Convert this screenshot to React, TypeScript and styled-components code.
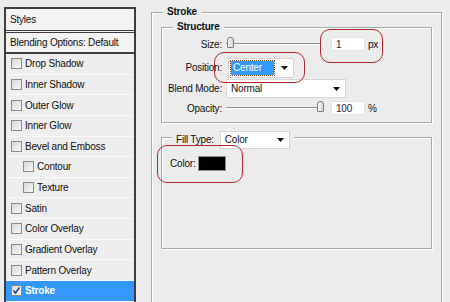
import React from "react";
import styled, { createGlobalStyle } from "styled-components";

const GlobalStyle = createGlobalStyle`
  html, body {
    margin: 0;
    padding: 0;
    background: #ececec;
  }
  body {
    font-family: "Liberation Sans", Arial, sans-serif;
    font-size: 10px;
    letter-spacing: -0.2px;
    color: #111;
  }
`;

const Page = styled.div`
  display: flex;
  align-items: flex-start;
  width: 450px;
  height: 302px;
  padding: 7px 0 0 4px;
  box-sizing: border-box;
  overflow: hidden;
  background: #ececec;
`;

/* ---------- left: styles list ---------- */

const StylesPanel = styled.div`
  flex-shrink: 0;
  width: 132px;
  height: 320px;
  box-sizing: border-box;
  border: 2px solid #3d3d3d;
  border-bottom: 0;
  background: #eeeeee;
`;

const PanelHeader = styled.div<{ $double?: boolean }>`
  display: flex;
  align-items: center;
  height: ${(p) => (p.$double ? 21 : 19)}px;
  padding-left: 4px;
  background: #f3f3f3;
  border-bottom: ${(p) => (p.$double ? "3px double #3d3d3d" : "2px solid #3d3d3d")};
`;

const StyleRow = styled.div<{ $indent?: boolean; $selected?: boolean }>`
  display: flex;
  align-items: center;
  gap: 3px;
  height: 19.64px;
  padding-left: ${(p) => (p.$indent ? 17 : 5)}px;
  border-bottom: 1px solid #f9f9f9;
  background: ${(p) => (p.$selected ? "#3399ff" : "transparent")};
  color: ${(p) => (p.$selected ? "#fff" : "#111")};
  font-weight: ${(p) => (p.$selected ? 700 : 400)};
`;

const Check = styled.span`
  display: inline-flex;
  align-items: center;
  justify-content: center;
  width: 11px;
  height: 11px;
  box-sizing: border-box;
  border: 1px solid #8a8a8a;
  background: linear-gradient(135deg, #d8d8d8, #f8f8f8);
`;

const CheckMark = () => (
  <svg width="9" height="9" viewBox="0 0 9 9">
    <path d="M1.5 4.5 L3.5 7 L7.5 1.5" fill="none" stroke="#22398a" strokeWidth="1.4" />
  </svg>
);

/* ---------- right: stroke settings ---------- */

const Group = styled.div<{ $height?: number }>`
  position: relative;
  box-sizing: border-box;
  border: 1px solid #a8a8a8;
  box-shadow: inset 1px 1px 0 #fff, 1px 1px 0 #fff;
  ${(p) => (p.$height ? `height: ${p.$height}px;` : "")}
`;

const OuterGroup = styled(Group)`
  width: 291px;
  margin: 5px 0 0 15px;
  padding: 0 9px;
  display: flex;
  flex-direction: column;
  align-items: stretch;
`;

const Legend = styled.div<{ $left: number }>`
  display: flex;
  align-items: center;
  align-self: flex-start;
  gap: 6px;
  width: fit-content;
  margin: -7px 0 0 ${(p) => p.$left}px;
  padding: 0 4px;
  line-height: 12px;
  background: #ececec;
  font-weight: 700;
`;

const InnerGroup = styled(Group)<{ $gap: number }>`
  margin-top: ${(p) => p.$gap}px;
  display: flex;
  flex-direction: column;
  align-items: flex-start;
`;

const FieldRows = styled.div`
  display: grid;
  grid-template-columns: 60px 1fr;
  column-gap: 4px;
  width: 100%;
  margin-top: 4px;
  padding-bottom: 7px;
`;

const Label = styled.div<{ $h: number; $mt?: number }>`
  display: flex;
  align-items: center;
  justify-content: flex-end;
  height: ${(p) => p.$h}px;
  margin-top: ${(p) => p.$mt ?? 0}px;
`;

const Control = styled.div<{ $h: number; $mt?: number }>`
  display: flex;
  align-items: center;
  height: ${(p) => p.$h}px;
  margin-top: ${(p) => p.$mt ?? 0}px;
`;

const Slider = styled.div`
  position: relative;
  width: 94px;
  height: 2px;
  border-top: 1px solid #8c8c8c;
  border-bottom: 1px solid #fff;
  box-sizing: border-box;
`;

const Thumb = styled.span`
  position: absolute;
  top: -7px;
  width: 7px;
  height: 11px;
  box-sizing: border-box;
  border: 1px solid #7d7d7d;
  border-radius: 3px 3px 1px 1px;
  background: linear-gradient(90deg, #fdfdfd, #d6d6d6);
`;

const NumberBox = styled.div`
  display: flex;
  align-items: center;
  width: 34px;
  height: 14px;
  margin-left: 11px;
  padding-left: 4px;
  box-sizing: border-box;
  background: #fff;
  border: 1px solid #e2e2e2;
  color: #1a1a40;
`;

const Unit = styled.span`
  margin-left: 3px;
`;

const Select = styled.div<{ $w: number; $h: number; $ml?: number }>`
  display: flex;
  align-items: center;
  justify-content: space-between;
  width: ${(p) => p.$w}px;
  height: ${(p) => p.$h}px;
  margin-left: ${(p) => p.$ml ?? 0}px;
  padding: 0 5px 0 2px;
  box-sizing: border-box;
  background: #fff;
  border: 1px solid #d6d6d6;
  font-weight: 400;
`;

const SelectText = styled.span<{ $active?: boolean }>`
  display: flex;
  align-items: center;
  height: 14px;
  padding: 0 ${(p) => (p.$active ? 12 : 2)}px 0 2px;
  background: ${(p) => (p.$active ? "#3399ff" : "transparent")};
  color: ${(p) => (p.$active ? "#fff" : "#111")};
  outline: ${(p) => (p.$active ? "1px dotted #7a4a10" : "none")};
`;

const Arrow = () => (
  <svg width="7" height="4" viewBox="0 0 7 4">
    <path d="M0 0 H7 L3.5 4 Z" fill="#111" />
  </svg>
);

const PlainLabel = styled.span`
  font-weight: 400;
`;

const ColorRow = styled.div`
  display: flex;
  align-items: center;
  gap: 3px;
  margin: 7px 0 0 8px;
  padding-bottom: 77px;
`;

const Swatch = styled.span<{ $color: string }>`
  width: 28px;
  height: 15px;
  box-sizing: border-box;
  border: 1px solid #8a8a8a;
  background: ${(p) => p.$color};
`;

const Ring = styled.div<{ $x: number; $y: number; $w: number; $h: number }>`
  position: absolute;
  left: ${(p) => p.$x}px;
  top: ${(p) => p.$y}px;
  width: ${(p) => p.$w}px;
  height: ${(p) => p.$h}px;
  box-sizing: border-box;
  border: 1.5px solid #b3272e;
  border-radius: 10px;
  pointer-events: none;
`;

const styleItems = [
  { name: "Drop Shadow" },
  { name: "Inner Shadow" },
  { name: "Outer Glow" },
  { name: "Inner Glow" },
  { name: "Bevel and Emboss" },
  { name: "Contour", indent: true },
  { name: "Texture", indent: true },
  { name: "Satin" },
  { name: "Color Overlay" },
  { name: "Gradient Overlay" },
  { name: "Pattern Overlay" },
  { name: "Stroke", selected: true },
];

const SliderField = ({ value, unit }: { value: number; unit: string }) => (
  <>
    <Slider>
      <Thumb style={{ left: `calc(${value}% - ${value === 100 ? 3 : 0}px)` }} />
    </Slider>
    <NumberBox>{value}</NumberBox>
    <Unit>{unit}</Unit>
  </>
);

export default function App() {
  return (
    <Page>
      <GlobalStyle />
      <StylesPanel>
        <PanelHeader $double>Styles</PanelHeader>
        <PanelHeader>Blending Options: Default</PanelHeader>
        {styleItems.map((item) => (
          <StyleRow key={item.name} $indent={item.indent} $selected={item.selected}>
            <Check>{item.selected && <CheckMark />}</Check>
            {item.name}
          </StyleRow>
        ))}
      </StylesPanel>

      <OuterGroup $height={300}>
        <Legend $left={2}>Stroke</Legend>

        <InnerGroup $gap={9}>
          <Legend $left={11}>Structure</Legend>
          <FieldRows>
            <Label $h={14}>Size:</Label>
            <Control $h={14}>
              <SliderField value={1} unit="px" />
            </Control>

            <Label $h={21} $mt={6}>Position:</Label>
            <Control $h={21} $mt={6}>
              <Select $w={66} $h={20} $ml={2}>
                <SelectText $active>Center</SelectText>
                <Arrow />
              </Select>
            </Control>

            <Label $h={19} $mt={1}>Blend Mode:</Label>
            <Control $h={19} $mt={1}>
              <Select $w={120} $h={19}>
                <SelectText>Normal</SelectText>
                <Arrow />
              </Select>
            </Control>

            <Label $h={14} $mt={3}>Opacity:</Label>
            <Control $h={14} $mt={3}>
              <SliderField value={100} unit="%" />
            </Control>
          </FieldRows>
        </InnerGroup>

        <InnerGroup $gap={14}>
          <Legend $left={10}>
            <PlainLabel>Fill Type:</PlainLabel>
            <Select $w={70} $h={18}>
              <SelectText>Color</SelectText>
              <Arrow />
            </Select>
          </Legend>
          <ColorRow>
            Color:
            <Swatch $color="#000" />
          </ColorRow>
        </InnerGroup>

        <Ring $x={168} $y={16} $w={63} $h={34} />
        <Ring $x={62} $y={39} $w={91} $h={31} />
        <Ring $x={5} $y={132} $w={86} $h={38} />
      </OuterGroup>
    </Page>
  );
}
